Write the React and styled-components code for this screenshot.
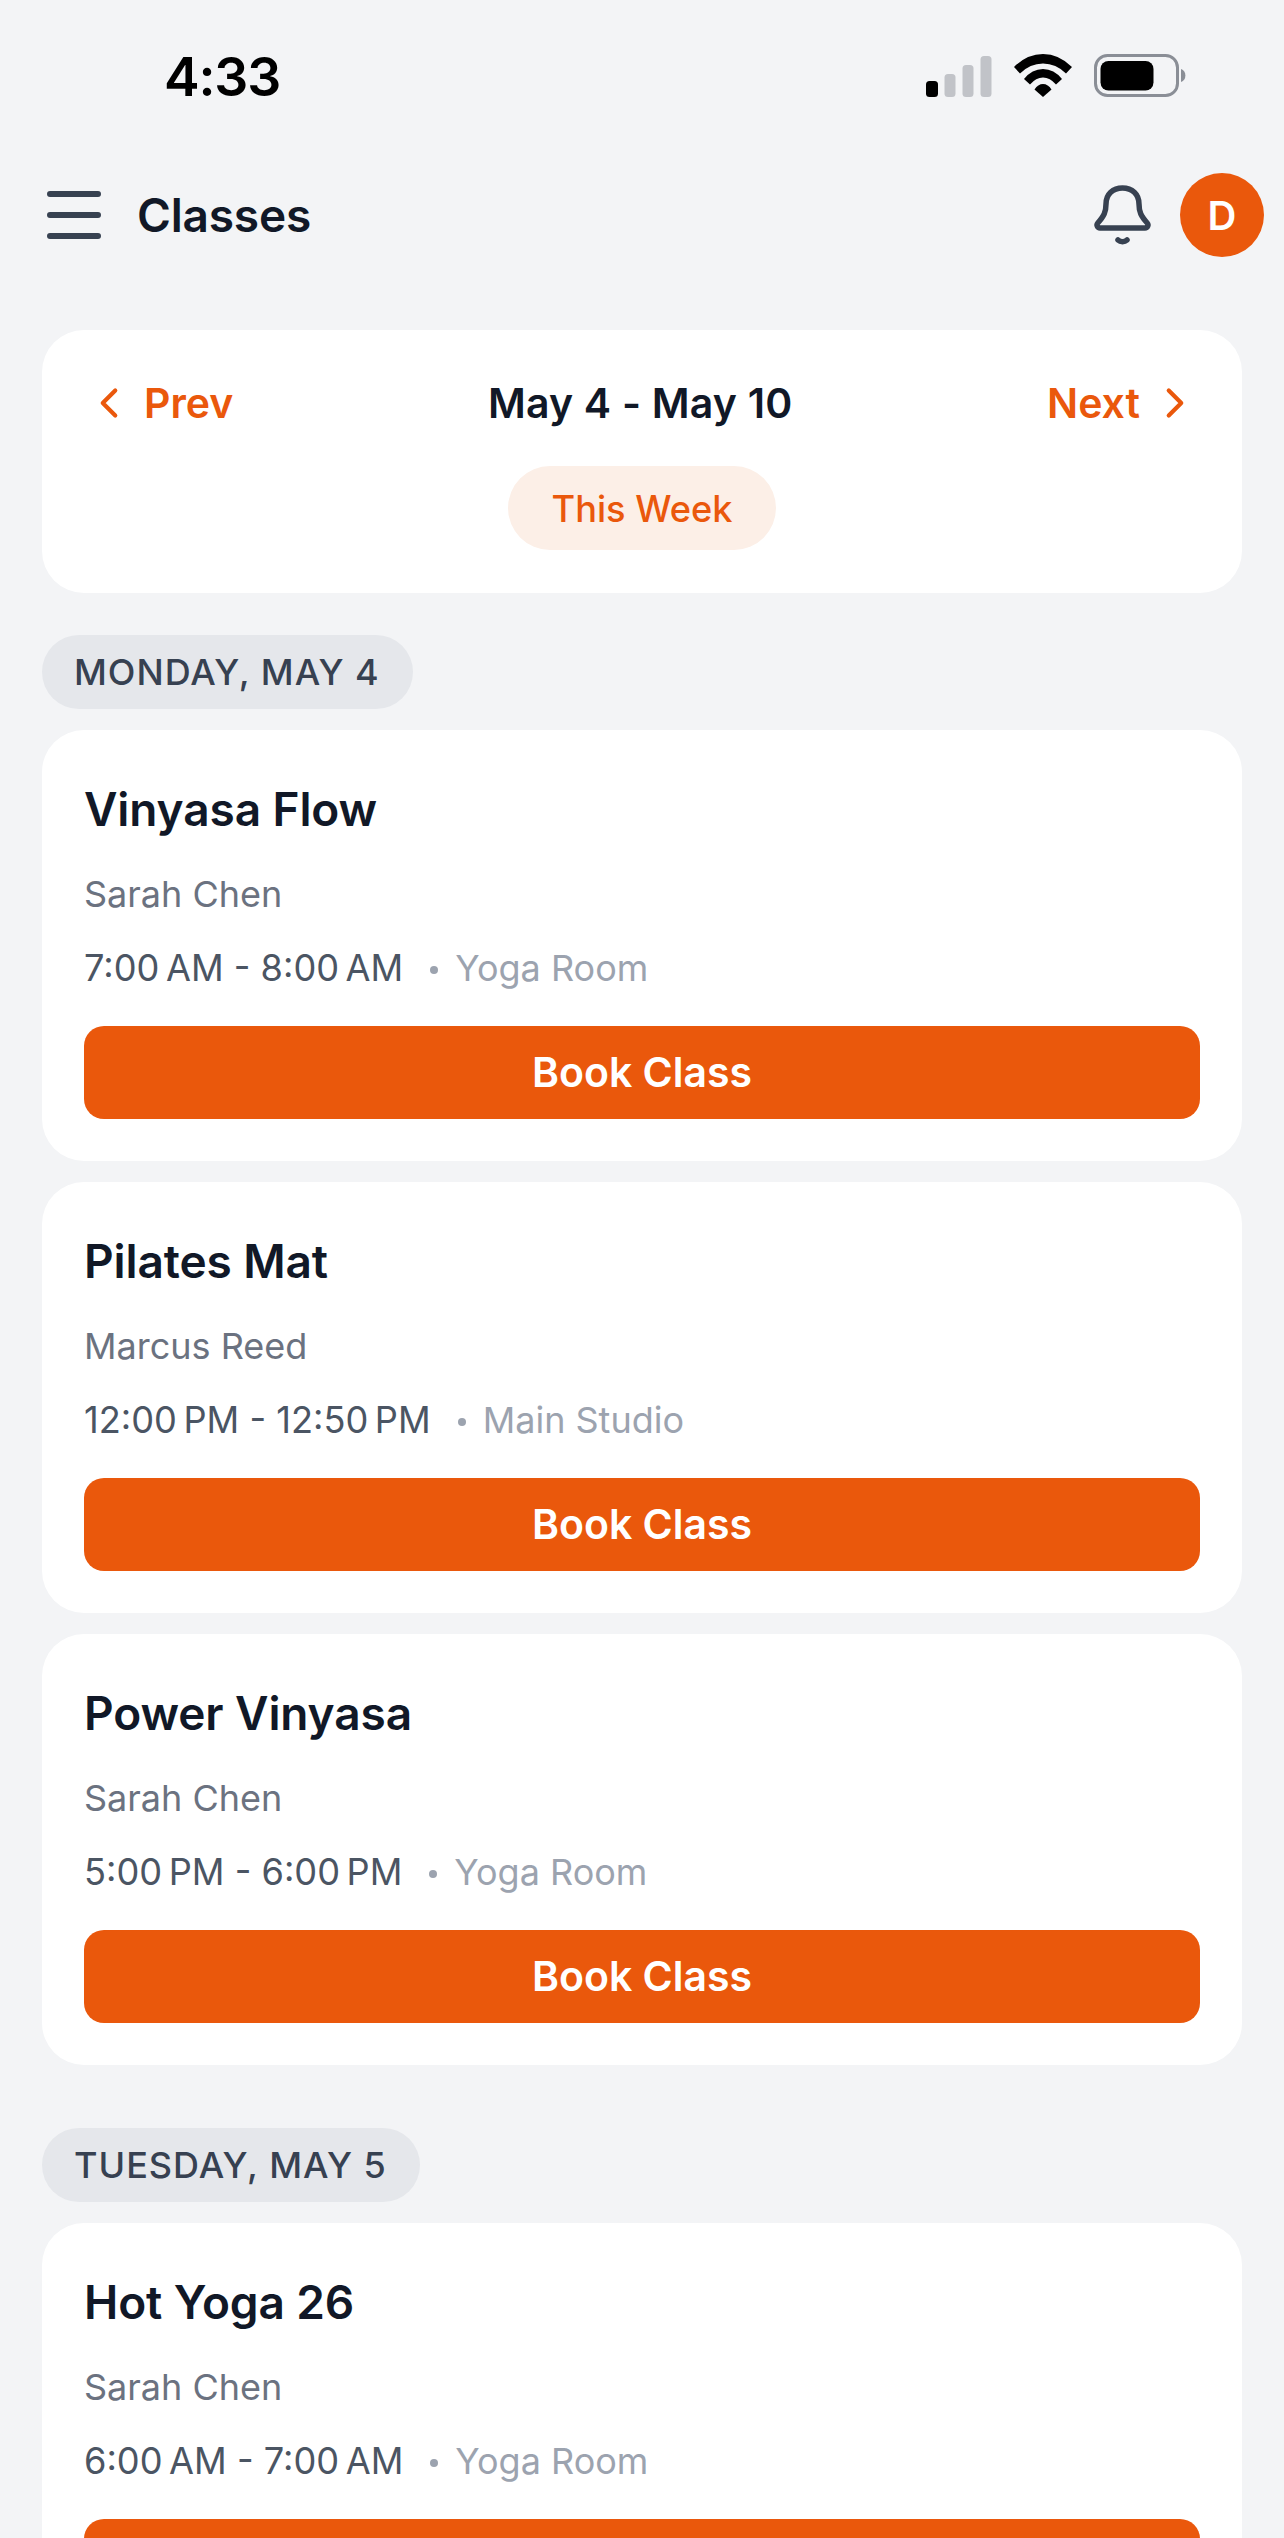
import React from "react";
import styled, { createGlobalStyle } from "styled-components";
import { ChevronLeft, ChevronRight } from "lucide-react";

const GlobalStyle = createGlobalStyle`
  html, body {
    margin: 0;
    padding: 0;
    background: #f3f4f6;
  }
  * {
    box-sizing: border-box;
  }
`

const Screen = styled.div`
  width: 1284px;
  height: 2538px;
  overflow: hidden;
  background: #f3f4f6;
  font-family: Inter, "Liberation Sans", sans-serif;
  color: #111827;
`

const StatusBar = styled.div`
  display: flex;
  justify-content: space-between;
  align-items: flex-start;
  height: 97px;
  padding: 53px 97px 0 164px;
`

const Time = styled.div`
  font-size: 53.5px;
  font-weight: 600;
  letter-spacing: -1.2px;
  line-height: 47px;
  color: #000;
`

const StatusIcons = styled.div`
  display: flex;
  align-items: flex-end;
  height: 44px;
  gap: 22px;
`

const Nav = styled.header`
  display: flex;
  justify-content: space-between;
  align-items: center;
  height: 84px;
  margin-top: 76px;
  padding: 0 20px 0 47px;
`

const NavGroup = styled.div`
  display: flex;
  align-items: center;
  gap: ${props => props.$gap}px;
`

const PageTitle = styled.h1`
  margin: 0;
  font-size: 46px;
  font-weight: 600;
  letter-spacing: -0.2px;
  line-height: 58px;
  color: #111827;
`

const Avatar = styled.div`
  display: flex;
  align-items: center;
  justify-content: center;
  width: 84px;
  height: 84px;
  border-radius: 50%;
  background: #ea580c;
  color: #fff;
  font-size: 40px;
  font-weight: 600;
`

const Main = styled.main`
  display: flex;
  flex-direction: column;
  margin-top: 73px;
  padding: 0 42px;
`

const WeekCard = styled.section`
  display: flex;
  flex-direction: column;
  align-items: center;
  height: 263px;
  padding: 43px 42px 0;
  border-radius: 42px;
  background: #fff;
`

const WeekRow = styled.div`
  display: flex;
  justify-content: space-between;
  align-items: center;
  align-self: stretch;
  height: 60px;
`

const WeekLink = styled.div`
  display: flex;
  align-items: center;
  gap: 10px;
  font-size: 41px;
  font-weight: 600;
  color: #ea580c;
`

const WeekRange = styled.div`
  font-size: 41px;
  font-weight: 600;
  letter-spacing: 0.2px;
  color: #111827;
`

const ThisWeek = styled.div`
  display: flex;
  align-items: center;
  height: 84px;
  margin-top: 33px;
  padding: 2px 44px 0;
  border-radius: 42px;
  background: #fcefe7;
  color: #ea580c;
  font-size: 36.2px;
  font-weight: 500;
`

const DaySection = styled.section`
  display: flex;
  flex-direction: column;
  align-items: stretch;
  gap: 21px;
  margin-top: ${props => props.$top}px;
`

const DayLabel = styled.div`
  display: flex;
  align-items: center;
  align-self: flex-start;
  height: 74px;
  padding: 0 33px 0 32px;
  border-radius: 37px;
  background: #e5e7eb;
  color: #374151;
  font-size: 36px;
  font-weight: 500;
  letter-spacing: 1px;
`

const ClassCard = styled.article`
  padding: 42px;
  border-radius: 42px;
  background: #fff;
`

const ClassName = styled.h2`
  margin: 0 0 22px;
  font-size: 46px;
  font-weight: 600;
  letter-spacing: -0.1px;
  line-height: 75px;
  color: #111827;
`

const Instructor = styled.div`
  margin-bottom: 24px;
  font-size: 36px;
  line-height: 50px;
  color: #6b7280;
`

const ClassMeta = styled.div`
  display: flex;
  align-items: center;
  height: 50px;
  margin-bottom: 33px;
  font-size: 36.2px;
  color: #4b5563;
`

const Dot = styled.span`
  width: 8px;
  height: 8px;
  margin: 4px 17px 0 27px;
  border-radius: 50%;
  background: #9ca3af;
`

const Room = styled.span`
  font-size: 36px;
  color: #9ca3af;
`

const BookButton = styled.button`
  display: block;
  width: 100%;
  height: 93px;
  padding: 0 0 2px;
  border: 0;
  border-radius: 20px;
  background: #ea580c;
  color: #fff;
  font-family: inherit;
  font-size: 41px;
  font-weight: 600;
`

const days = [
  {
    label: "MONDAY, MAY 4",
    top: 42,
    classes: [
      { name: "Vinyasa Flow", teacher: "Sarah Chen", time: "7:00\u202fAM - 8:00\u202fAM", room: "Yoga Room" },
      { name: "Pilates Mat", teacher: "Marcus Reed", time: "12:00\u202fPM - 12:50\u202fPM", room: "Main Studio" },
      { name: "Power Vinyasa", teacher: "Sarah Chen", time: "5:00\u202fPM - 6:00\u202fPM", room: "Yoga Room" },
    ],
  },
  {
    label: "TUESDAY, MAY 5",
    top: 63,
    classes: [
      { name: "Hot Yoga 26", teacher: "Sarah Chen", time: "6:00\u202fAM - 7:00\u202fAM", room: "Yoga Room" },
    ],
  },
]

const SignalIcon = () => (
  <svg width="66" height="41" viewBox="0 0 66 41">
    <rect x="0" y="25" width="12" height="16" rx="3.5" fill="#000" />
    <rect x="18.5" y="18" width="11" height="23" rx="3.5" fill="#c1c3c8" />
    <rect x="36.5" y="9" width="11" height="32" rx="3.5" fill="#c1c3c8" />
    <rect x="54.5" y="0" width="11" height="41" rx="3.5" fill="#c1c3c8" />
  </svg>
)

const WifiIcon = () => (
  <svg width="58" height="43" viewBox="0 0 58 43">
    <path d="M0 13Q13 0 29 0T58 13L52 19.500Q42 9.500 29 9.500T6 19.500Z" fill="#000" />
    <path d="M10 25Q18 15 29 15T48 25L42 30.500Q36 23.500 29 23.500T16 30.500Z" fill="#000" />
    <path d="M20.500 35.500Q24 30 29 30T37.500 35.500L29 43Z" fill="#000" />
  </svg>
)

const BatteryIcon = () => (
  <svg width="93" height="43" viewBox="0 0 93 43">
    <rect x="1.500" y="1.500" width="82" height="40" rx="12" fill="none" stroke="#8a8e96" strokeWidth="3" />
    <rect x="6.500" y="7" width="53" height="29.500" rx="8" fill="#000" />
    <path d="M87 15a7 7 0 0 1 0 13Z" fill="#8a8e96" />
  </svg>
)

const MenuIcon = () => (
  <svg width="54" height="48" viewBox="0 0 54 48" fill="none" stroke="#374151" strokeWidth="6" strokeLinecap="round">
    <path d="M3 3H51M3 24H51M3 45H51" />
  </svg>
)

const BellIcon = () => (
  <svg width="60" height="66" viewBox="0 0 60 66" fill="none" stroke="#374151" strokeWidth="5.500" strokeLinecap="round" strokeLinejoin="round">
    <path d="M8 46H53a3 3 0 0 0 2.200-5C49 34 47 30 47 22C47 12 40 6 30.500 6C21 6 14 12 14 22C14 30 12 34 5.800 41a3 3 0 0 0 2.200 5Z" />
    <path d="M26 58a6 5 0 0 0 9 0" />
  </svg>
)

const App = () => (
  <Screen>
    <GlobalStyle />
    <StatusBar>
      <Time>4:33</Time>
      <StatusIcons>
        <SignalIcon />
        <WifiIcon />
        <BatteryIcon />
      </StatusIcons>
    </StatusBar>
    <Nav>
      <NavGroup $gap={36}>
        <MenuIcon />
        <PageTitle>Classes</PageTitle>
      </NavGroup>
      <NavGroup $gap={28}>
        <BellIcon />
        <Avatar>D</Avatar>
      </NavGroup>
    </Nav>
    <Main>
      <WeekCard>
        <WeekRow>
          <WeekLink>
            <ChevronLeft size={50} />
            Prev
          </WeekLink>
          <WeekRange>May 4 - May 10</WeekRange>
          <WeekLink>
            Next
            <ChevronRight size={50} />
          </WeekLink>
        </WeekRow>
        <ThisWeek>This Week</ThisWeek>
      </WeekCard>
      {days.map(day => (
        <DaySection key={day.label} $top={day.top}>
          <DayLabel>{day.label}</DayLabel>
          {day.classes.map(item => (
            <ClassCard key={item.name}>
              <ClassName>{item.name}</ClassName>
              <Instructor>{item.teacher}</Instructor>
              <ClassMeta>
                {item.time}
                <Dot />
                <Room>{item.room}</Room>
              </ClassMeta>
              <BookButton>Book Class</BookButton>
            </ClassCard>
          ))}
        </DaySection>
      ))}
    </Main>
  </Screen>
)

export default App
